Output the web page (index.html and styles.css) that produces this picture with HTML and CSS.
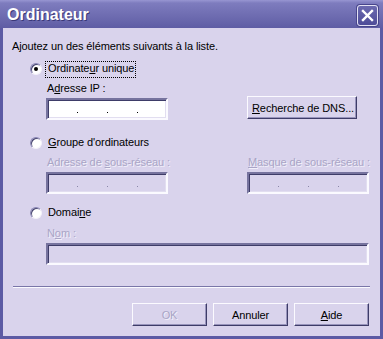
FILE: index.html
```html
<!DOCTYPE html>
<html lang="fr">
<head>
  <meta charset="UTF-8" />
  <meta name="viewport" content="width=device-width, initial-scale=1.0" />
  <title>Ordinateur</title>
  <link rel="stylesheet" href="styles.css">
</head>
<body>
  <div class="fenetre">
    <div class="barre-titre">
      <span class="titre">Ordinateur</span>
      <button class="fermer" aria-label="Fermer">
        <svg width="13" height="13" viewBox="0 0 13 13">
          <path d="M2 2 L11 11 M11 2 L2 11" stroke="#fff" stroke-width="2.4" stroke-linecap="square" fill="none" />
        </svg>
      </button>
    </div>

    <div class="contenu">
      <p class="intro">Ajoutez un des éléments suivants à la liste.</p>

      <div class="choix choix-1">
        <span class="radio coche"></span>
        <span class="libelle focus">Ordinate<u>u</u>r unique</span>
      </div>
      <div class="champs champs-ip">
        <label class="etiquette">A<u>d</u>resse IP :</label>
        <span></span>
        <div class="ip"><i></i><i></i><i></i></div>
        <button class="bouton bouton-dns"><u>R</u>echerche de DNS...</button>
      </div>

      <div class="choix choix-2">
        <span class="radio"></span>
        <span class="libelle"><u>G</u>roupe d'ordinateurs</span>
      </div>
      <div class="champs">
        <label class="etiquette inactif">Adresse de <u>s</u>ous-réseau :</label>
        <label class="etiquette inactif"><u>M</u>asque de sous-réseau :</label>
        <div class="ip desactive"><i></i><i></i><i></i></div>
        <div class="ip desactive"><i></i><i></i><i></i></div>
      </div>

      <div class="choix choix-3">
        <span class="radio"></span>
        <span class="libelle">Domai<u>n</u>e</span>
      </div>
      <div class="champ-nom">
        <label class="etiquette inactif">N<u>o</u>m :</label>
        <div class="saisie desactive"></div>
      </div>

      <div class="separateur"></div>

      <div class="actions">
        <button class="bouton inactif-btn">OK</button>
        <button class="bouton">Annuler</button>
        <button class="bouton"><u>A</u>ide</button>
      </div>
    </div>
  </div>
</body>
</html>
```

FILE: styles.css
```css
body {
  margin: 0;
  padding: 0;
  font-family: "Liberation Sans", Arial, sans-serif;
  font-size: 11px;
  line-height: 13px;
  letter-spacing: -0.1px;
  color: #000;
  background: #5c5aa4;
}
.fenetre {
  width: 383px;
  height: 339px;
  display: flex;
  flex-direction: column;
  background: #5c5aa4;
}
.barre-titre {
  height: 28px;
  display: flex;
  align-items: center;
  justify-content: space-between;
  padding: 0 5px 0 7px;
  background: linear-gradient(#9896d2 0, #7e7cbe 3px, #7270b4 45%, #6664aa 80%, #5e5ca4 100%);
}
.titre {
  font-weight: bold;
  font-size: 16px;
  letter-spacing: 0;
  color: #fff;
  text-shadow: 1px 1px 0 #3a3878;
  margin-top: 1px;
}
.fermer {
  width: 21px;
  height: 21px;
  padding: 0;
  display: flex;
  align-items: center;
  justify-content: center;
  border: 1px solid #e4e2f4;
  border-radius: 3px;
  background: linear-gradient(#6c6ab0, #4e4c98);
  box-shadow: 0 0 0 1px #48468c;
  margin-top: 2px;
}
.contenu {
  flex: 1;
  margin: 0 3px 3px 3px;
  background: #d9d3ec;
  padding: 12px 10px 0 9px;
}
.intro {
  margin: 0;
}
.choix {
  display: flex;
  align-items: center;
  margin-left: 18px;
  height: 13px;
}
.choix-1 { margin-top: 9px; }
.choix-2 { margin-top: 16px; }
.choix-3 { margin-top: 12px; }
.radio {
  width: 10px;
  height: 10px;
  border-radius: 50%;
  background: #fff;
  border: 1px solid;
  border-color: #8884b4 #f4f2fa #f4f2fa #8884b4;
  box-shadow: inset 1px 1px 0 #46446e;
  margin-right: 4px;
  position: relative;
}
.coche::after {
  content: "";
  position: absolute;
  left: 3px;
  top: 3px;
  width: 4px;
  height: 4px;
  border-radius: 50%;
  background: #000;
}
.libelle {
  padding: 0 1px 2px 2px;
  margin-top: 2px;
}
.focus {
  outline: 1px dotted #000;
}
.champs {
  display: grid;
  grid-template-columns: 201px 122px;
  margin: 7px 0 0 34px;
  row-gap: 3px;
  white-space: nowrap;
}
.champ-nom {
  margin: 8px 0 0 34px;
  display: flex;
  flex-direction: column;
  gap: 3px;
}
.etiquette {
  padding-left: 1px;
}
.inactif {
  color: #a9a5c6;
  text-shadow: 1px 1px 0 #f2f0fa;
}
.ip, .saisie {
  height: 18px;
  border: 2px solid;
  border-color: #76739e #fbfaff #fbfaff #76739e;
  box-shadow: inset 1px 1px 0 #3e3c68, inset -1px -1px 0 #e2def0;
  background: #fff;
  box-sizing: content-box;
  display: flex;
  justify-content: space-around;
  align-items: center;
  padding: 0 14px;
}
.ip {
  width: 90px;
}
.saisie {
  width: 319px;
  padding: 0;
}
.ip i {
  width: 1px;
  height: 1px;
  background: #000;
  margin-top: 6px;
}
.desactive {
  background: #d9d3ec;
}
.desactive i {
  background: #8a86a8;
}
.bouton {
  font-family: "Liberation Sans", Arial, sans-serif;
  font-size: 11px;
  letter-spacing: -0.1px;
  color: #000;
  background: #d9d3ec;
  border: 1px solid;
  border-color: #fbfaff #3e3c68 #3e3c68 #fbfaff;
  box-shadow: inset -1px -1px 0 #9894bc;
  padding: 0;
  height: 23px;
  white-space: nowrap;
}
.bouton-dns {
  width: 110px;
  margin-top: -2px;
  text-align: left;
  padding-left: 4px;
}
.champs-ip {
  grid-template-columns: 201px auto;
  justify-items: start;
}
.separateur {
  margin: 21px 0 0 1px;
  width: 357px;
  height: 1px;
  background: #7a76a8;
  border-bottom: 1px solid #fbfaff;
}
.actions {
  display: flex;
  justify-content: flex-end;
  gap: 6px;
  margin-top: 15px;
  padding-right: 1px;
}
.actions .bouton {
  width: 75px;
}
.inactif-btn {
  color: #a9a5c6;
  text-shadow: 1px 1px 0 #f2f0fa;
}
```
